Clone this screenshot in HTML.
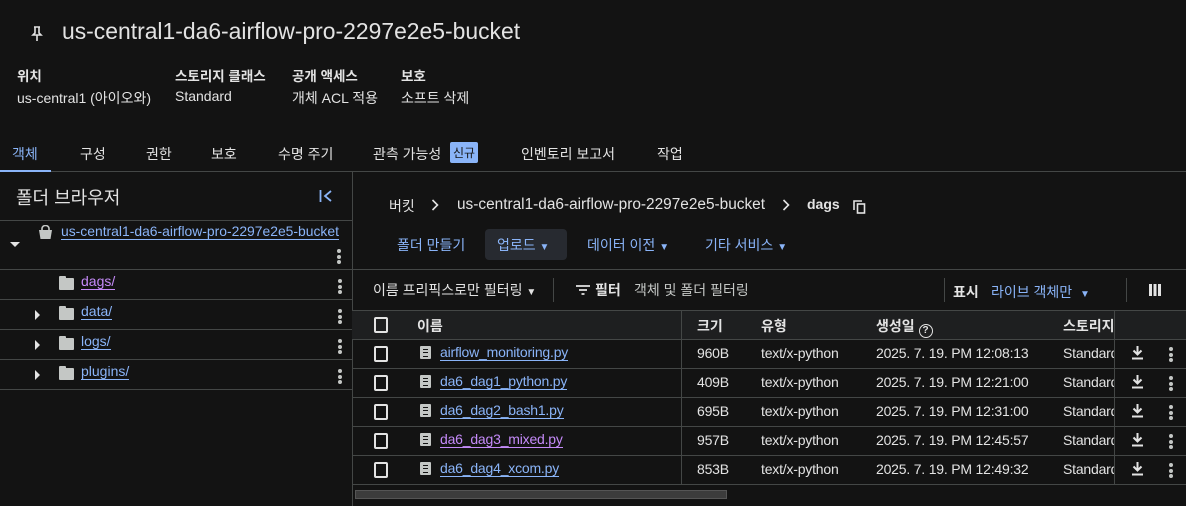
<!DOCTYPE html>
<html><head><meta charset="utf-8"><style>
*{margin:0;padding:0;box-sizing:border-box}
body{width:1186px;height:506px;background:#131313;color:#e3e3e3;font-family:"Liberation Sans","Noto Sans CJK KR",sans-serif;font-size:14px;position:relative;overflow:hidden}
.a{position:absolute;white-space:nowrap}
.b{font-weight:bold}
.lk{color:#8ab4f8;border-bottom:1px solid #8ab4f8;line-height:16px}
.vs{color:#c58af9;border-bottom:1px solid #c58af9;line-height:16px}
.hl{position:absolute;height:1px;background:#444746}
.vl{position:absolute;width:1px;background:#444746}
.cb{position:absolute;width:14px;height:16px;border:2px solid #e3e3e3;border-radius:2px}
.dots{position:absolute;width:4px}
.dots i{display:block;width:4px;height:4px;border-radius:2px;background:#c4c7c5;margin-bottom:1.5px}
.fold{position:absolute;width:15px;height:12px;background:#c4c7c5;border-radius:1px}
.fold:before{content:"";position:absolute;left:0;top:-2px;width:7px;height:3px;background:#c4c7c5;border-radius:1px 1px 0 0}
.tri{position:absolute;width:0;height:0;border-top:5px solid transparent;border-bottom:5px solid transparent;border-left:5px solid #e3e3e3}
.doc{position:absolute;width:11px;height:13px;background:#c4c7c5;border-radius:1px}
.doc:after{content:"";position:absolute;left:3px;top:3px;width:5px;height:6px;border-top:1px solid #131313;border-bottom:1px solid #131313;background:linear-gradient(#131313,#131313) 0 2px/5px 1px no-repeat}
.t{font-size:14px;letter-spacing:-0.2px}
.dl{position:absolute}
</style></head><body>
<svg class="a" style="left:31px;top:26px" width="12" height="16" viewBox="0 0 12 16"><path d="M3 1h6M4 1v6L2 9h8L8 7V1M6 9v6" stroke="#e3e3e3" stroke-width="1.6" fill="none"/></svg>
<div class="a" style="left:62px;top:18px;font-size:22.9px;color:#e3e3e3">us-central1-da6-airflow-pro-2297e2e5-bucket</div>

<div class="a b" style="left:17px;top:65px;font-size:13.5px">위치</div>
<div class="a" style="left:17px;top:88px">us-central1 (아이오와)</div>
<div class="a b" style="left:175px;top:65px;font-size:13.5px">스토리지 클래스</div>
<div class="a" style="left:175px;top:88px">Standard</div>
<div class="a b" style="left:292px;top:65px;font-size:13.5px">공개 액세스</div>
<div class="a" style="left:292px;top:88px">개체 ACL 적용</div>
<div class="a b" style="left:401px;top:65px;font-size:13.5px">보호</div>
<div class="a" style="left:401px;top:88px">소프트 삭제</div>

<div class="a" style="left:12px;top:144px;color:#8ab4f8">객체</div>
<div class="a" style="left:80px;top:144px">구성</div>
<div class="a" style="left:146px;top:144px">권한</div>
<div class="a" style="left:211px;top:144px">보호</div>
<div class="a" style="left:278px;top:144px">수명 주기</div>
<div class="a" style="left:373px;top:144px">관측 가능성</div>
<div class="a" style="left:450px;top:142px;background:#8ab4f8;color:#131313;font-size:12px;padding:2px 3px;border-radius:2px">신규</div>
<div class="a" style="left:521px;top:144px">인벤토리 보고서</div>
<div class="a" style="left:657px;top:144px">작업</div>
<div class="hl" style="left:0;top:171px;width:1186px"></div>
<div class="a" style="left:0;top:170px;width:51px;height:2px;background:#8ab4f8"></div>

<div class="vl" style="left:352px;top:171px;height:335px"></div>
<div class="a" style="left:16px;top:184px;font-size:18px">폴더 브라우저</div>
<svg class="a" style="left:319px;top:189px" width="14" height="14" viewBox="0 0 14 14"><path d="M1.5 1v12M12 2L6 7l6 5" stroke="#8ab4f8" stroke-width="1.8" fill="none"/></svg>
<div class="hl" style="left:0;top:220px;width:352px"></div>
<div class="a" style="left:10px;top:242px;border-left:5px solid transparent;border-right:5px solid transparent;border-top:5px solid #e3e3e3"></div>
<svg class="a" style="left:38px;top:225px" width="15" height="15" viewBox="0 0 15 15"><path d="M4 5V3.5a3.5 3 0 0 1 7 0V5" stroke="#c4c7c5" stroke-width="1.6" fill="none"/><path d="M1 5h13l-1.5 9h-10z" fill="#c4c7c5"/></svg>
<div class="a" style="left:61px;top:223px;font-size:13.9px"><span class="lk">us-central1-da6-airflow-pro-2297e2e5-bucket</span></div>
<div class="dots" style="left:337px;top:249px"><i></i><i></i><i></i></div>
<div class="hl" style="left:0;top:269px;width:352px"></div>
<div class="fold" style="left:59px;top:278px"></div>
<div class="a" style="left:81px;top:273px"><span class="vs">dags/</span></div>
<div class="dots" style="left:338px;top:279px"><i></i><i></i><i></i></div>
<div class="hl" style="left:0;top:299px;width:352px"></div>
<div class="tri" style="left:35px;top:310px"></div>
<div class="fold" style="left:59px;top:308px"></div>
<div class="a" style="left:81px;top:303px"><span class="lk">data/</span></div>
<div class="dots" style="left:338px;top:309px"><i></i><i></i><i></i></div>
<div class="hl" style="left:0;top:329px;width:352px"></div>
<div class="tri" style="left:35px;top:340px"></div>
<div class="fold" style="left:59px;top:338px"></div>
<div class="a" style="left:81px;top:333px"><span class="lk">logs/</span></div>
<div class="dots" style="left:338px;top:339px"><i></i><i></i><i></i></div>
<div class="hl" style="left:0;top:359px;width:352px"></div>
<div class="tri" style="left:35px;top:370px"></div>
<div class="fold" style="left:59px;top:368px"></div>
<div class="a" style="left:81px;top:363px"><span class="lk">plugins/</span></div>
<div class="dots" style="left:338px;top:369px"><i></i><i></i><i></i></div>
<div class="hl" style="left:0;top:389px;width:352px"></div>

<div class="a" style="left:389px;top:196px">버킷</div>
<svg class="a" style="left:431px;top:199px" width="8" height="12" viewBox="0 0 8 12"><path d="M1.5 1l5 5-5 5" stroke="#e3e3e3" stroke-width="1.6" fill="none"/></svg>
<div class="a" style="left:457px;top:196px;font-size:15.4px">us-central1-da6-airflow-pro-2297e2e5-bucket</div>
<svg class="a" style="left:782px;top:199px" width="8" height="12" viewBox="0 0 8 12"><path d="M1.5 1l5 5-5 5" stroke="#e3e3e3" stroke-width="1.6" fill="none"/></svg>
<div class="a b" style="left:807px;top:196px">dags</div>
<svg class="a" style="left:853px;top:200px" width="13" height="14" viewBox="0 0 13 14"><path d="M1 10V1h8" stroke="#e3e3e3" stroke-width="1.6" fill="none"/><rect x="4.5" y="4" width="7" height="9" stroke="#e3e3e3" stroke-width="1.6" fill="none"/></svg>

<div class="a" style="left:397px;top:235px;color:#8ab4f8">폴더 만들기</div>
<div class="a" style="left:485px;top:229px;width:82px;height:31px;background:#272a30;border-radius:4px"></div>
<div class="a" style="left:497px;top:235px;color:#8ab4f8">업로드 <span style="font-size:10px">▼</span></div>
<div class="a" style="left:587px;top:235px;color:#8ab4f8">데이터 이전 <span style="font-size:10px">▼</span></div>
<div class="a" style="left:705px;top:235px;color:#8ab4f8">기타 서비스 <span style="font-size:10px">▼</span></div>
<div class="hl" style="left:352px;top:269px;width:834px"></div>

<div class="a" style="left:373px;top:280px">이름 프리픽스로만 필터링 <span style="font-size:10px">▼</span></div>
<div class="vl" style="left:553px;top:278px;height:24px"></div>
<svg class="a" style="left:575px;top:284px" width="16" height="12" viewBox="0 0 16 12"><path d="M1 2h14M4 6h8M6.5 10h3" stroke="#e3e3e3" stroke-width="1.8"/></svg>
<div class="a b" style="left:595px;top:280px">필터</div>
<div class="a" style="left:634px;top:280px;color:#c4c7c5">객체 및 폴더 필터링</div>
<div class="vl" style="left:944px;top:278px;height:24px"></div>
<div class="a b" style="left:953px;top:282px">표시</div>
<div class="a" style="left:991px;top:282px;color:#8ab4f8">라이브 객체만 &nbsp;<span style="font-size:10px">▼</span></div>
<div class="vl" style="left:1126px;top:278px;height:24px"></div>
<div class="a" style="left:1149px;top:284px;width:12px;height:12px;background:repeating-linear-gradient(90deg,#e3e3e3 0 3px,transparent 3px 4.5px)"></div>

<div class="a" style="left:352px;top:310px;width:834px;height:29px;background:#1e1f20;border-top:1px solid #444746"></div>
<div class="cb" style="left:374px;top:317px"></div>
<div class="a b" style="left:417px;top:316px">이름</div>
<div class="a b" style="left:697px;top:316px">크기</div>
<div class="a b" style="left:761px;top:316px">유형</div>
<div class="a b" style="left:876px;top:316px">생성일 <span style="display:inline-block;width:14px;height:14px;border:1.5px solid #e3e3e3;border-radius:50%;font-size:10px;text-align:center;line-height:11px;vertical-align:-2px">?</span></div>
<div class="a b" style="left:1063px;top:316px;width:51px;overflow:hidden">스토리지</div>
<div class="vl" style="left:681px;top:310px;height:175px"></div>
<div class="vl" style="left:1114px;top:310px;height:175px"></div>

<div class="hl" style="left:352px;top:339px;width:834px"></div>
<div class="hl" style="left:352px;top:368px;width:834px"></div>
<div class="hl" style="left:352px;top:397px;width:834px"></div>
<div class="hl" style="left:352px;top:426px;width:834px"></div>
<div class="hl" style="left:352px;top:455px;width:834px"></div>
<div class="hl" style="left:352px;top:484px;width:834px"></div>

<div class="cb" style="left:374px;top:346px"></div><div class="doc" style="left:420px;top:346px"></div>
<div class="a t" style="left:440px;top:344px"><span class="lk">airflow_monitoring.py</span></div>
<div class="a t" style="left:697px;top:345px">960B</div><div class="a t" style="left:761px;top:345px">text/x-python</div><div class="a t" style="left:876px;top:345px">2025. 7. 19. PM 12:08:13</div><div class="a t" style="left:1063px;top:345px;width:51px;overflow:hidden">Standard</div>

<div class="cb" style="left:374px;top:375px"></div><div class="doc" style="left:420px;top:375px"></div>
<div class="a t" style="left:440px;top:373px"><span class="lk">da6_dag1_python.py</span></div>
<div class="a t" style="left:697px;top:374px">409B</div><div class="a t" style="left:761px;top:374px">text/x-python</div><div class="a t" style="left:876px;top:374px">2025. 7. 19. PM 12:21:00</div><div class="a t" style="left:1063px;top:374px;width:51px;overflow:hidden">Standard</div>

<div class="cb" style="left:374px;top:404px"></div><div class="doc" style="left:420px;top:404px"></div>
<div class="a t" style="left:440px;top:402px"><span class="lk">da6_dag2_bash1.py</span></div>
<div class="a t" style="left:697px;top:403px">695B</div><div class="a t" style="left:761px;top:403px">text/x-python</div><div class="a t" style="left:876px;top:403px">2025. 7. 19. PM 12:31:00</div><div class="a t" style="left:1063px;top:403px;width:51px;overflow:hidden">Standard</div>

<div class="cb" style="left:374px;top:433px"></div><div class="doc" style="left:420px;top:433px"></div>
<div class="a t" style="left:440px;top:431px"><span class="vs">da6_dag3_mixed.py</span></div>
<div class="a t" style="left:697px;top:432px">957B</div><div class="a t" style="left:761px;top:432px">text/x-python</div><div class="a t" style="left:876px;top:432px">2025. 7. 19. PM 12:45:57</div><div class="a t" style="left:1063px;top:432px;width:51px;overflow:hidden">Standard</div>

<div class="cb" style="left:374px;top:462px"></div><div class="doc" style="left:420px;top:462px"></div>
<div class="a t" style="left:440px;top:460px"><span class="lk">da6_dag4_xcom.py</span></div>
<div class="a t" style="left:697px;top:461px">853B</div><div class="a t" style="left:761px;top:461px">text/x-python</div><div class="a t" style="left:876px;top:461px">2025. 7. 19. PM 12:49:32</div><div class="a t" style="left:1063px;top:461px;width:51px;overflow:hidden">Standard</div>

<svg class="dl" style="left:1131px;top:346px" width="13" height="14" viewBox="0 0 13 14"><path d="M6.5 0v8M2.5 4.5l4 4 4-4M1 12.5h11" stroke="#e3e3e3" stroke-width="2" fill="none"/></svg>
<svg class="dl" style="left:1131px;top:375px" width="13" height="14" viewBox="0 0 13 14"><path d="M6.5 0v8M2.5 4.5l4 4 4-4M1 12.5h11" stroke="#e3e3e3" stroke-width="2" fill="none"/></svg>
<svg class="dl" style="left:1131px;top:404px" width="13" height="14" viewBox="0 0 13 14"><path d="M6.5 0v8M2.5 4.5l4 4 4-4M1 12.5h11" stroke="#e3e3e3" stroke-width="2" fill="none"/></svg>
<svg class="dl" style="left:1131px;top:433px" width="13" height="14" viewBox="0 0 13 14"><path d="M6.5 0v8M2.5 4.5l4 4 4-4M1 12.5h11" stroke="#e3e3e3" stroke-width="2" fill="none"/></svg>
<svg class="dl" style="left:1131px;top:462px" width="13" height="14" viewBox="0 0 13 14"><path d="M6.5 0v8M2.5 4.5l4 4 4-4M1 12.5h11" stroke="#e3e3e3" stroke-width="2" fill="none"/></svg>
<div class="dots" style="left:1169px;top:347px"><i></i><i></i><i></i></div>
<div class="dots" style="left:1169px;top:376px"><i></i><i></i><i></i></div>
<div class="dots" style="left:1169px;top:405px"><i></i><i></i><i></i></div>
<div class="dots" style="left:1169px;top:434px"><i></i><i></i><i></i></div>
<div class="dots" style="left:1169px;top:463px"><i></i><i></i><i></i></div>

<div class="a" style="left:355px;top:490px;width:372px;height:9px;background:#3c3c3c;border:1px solid #555"></div>
</body></html>
